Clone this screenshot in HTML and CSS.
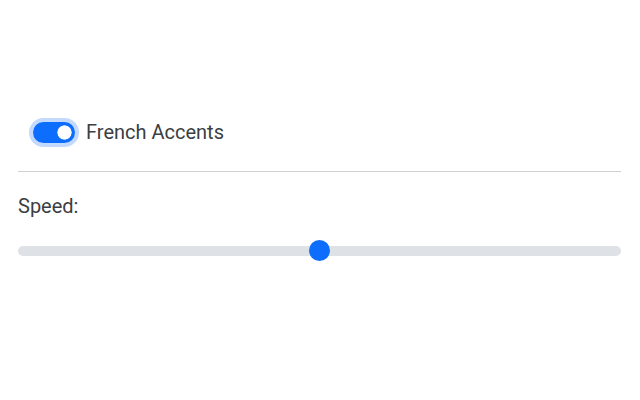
FILE: index.html
```html
<!DOCTYPE html>
<html lang="en">
<head>
<meta charset="utf-8">
<title>Settings</title>
<link rel="stylesheet" href="styles.css">
</head>
<body>
<main class="page">
  <label class="switch-row">
    <input class="switch" type="checkbox" checked>
    <span class="switch-label">French Accents</span>
  </label>
  <hr class="divider">
  <label class="speed-label" for="speed">Speed:</label>
  <input class="range" id="speed" type="range" min="0" max="100" value="50">
</main>
</body>
</html>
```

FILE: styles.css
```css
* { box-sizing: border-box; }
html, body { margin: 0; padding: 0; background: #fff; }
body {
  font-family: Roboto, "Liberation Sans", sans-serif;
  font-size: 20px;
  line-height: 30px;
  color: #3b3e42;
}
.page {
  padding: 117px 19px 0 18px;
  display: flex;
  flex-direction: column;
}
.switch-row {
  display: flex;
  align-items: center;
  gap: 11px;
  height: 30px;
  padding-left: 15px;
}
.switch {
  appearance: none;
  -webkit-appearance: none;
  margin: 0;
  width: 42px;
  height: 21px;
  border-radius: 11px;
  background: #0d6efd radial-gradient(circle at 31.5px 50%, #fff 6.8px, transparent 7.4px);
  box-shadow: 0 0 0 4px #c3dafe;
  flex: none;
}
.switch-label { display: block; }
.divider {
  border: 0;
  height: 1px;
  background: #cfd0d2;
  margin: 24px 0 0;
}
.speed-label {
  display: block;
  margin-top: 19px;
}
.range {
  appearance: none;
  -webkit-appearance: none;
  display: block;
  width: 100%;
  height: 21px;
  margin: 19px 0 0;
  background: transparent;
}
.range::-webkit-slider-runnable-track {
  height: 10px;
  border-radius: 5px;
  background: #dee2e6;
}
.range::-webkit-slider-thumb {
  -webkit-appearance: none;
  appearance: none;
  width: 21px;
  height: 21px;
  border-radius: 50%;
  background: #0d6efd;
  border: 0;
  margin-top: -5.5px;
}
```
